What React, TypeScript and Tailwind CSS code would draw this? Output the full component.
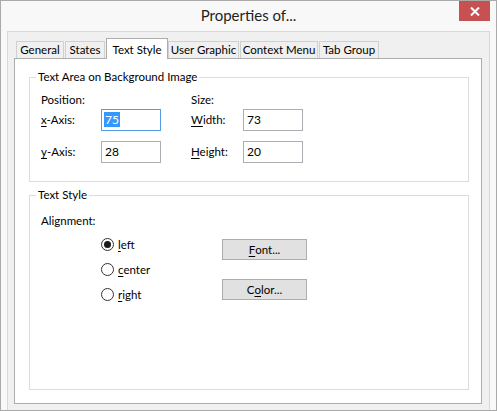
import React from "react";

const font = { fontFamily: 'Lato, "Segoe UI", Arial, sans-serif' };

function U({ children }: { children: React.ReactNode }) {
  return <span className="underline underline-offset-[2px] decoration-[1px]">{children}</span>;
}

function Tab({ label, w, active }: { label: string; w: number; active?: boolean }) {
  if (active) {
    return (
      <div
        className="relative z-10 -mb-px h-[21px] bg-white border border-b-0 border-[#adadad] flex items-start justify-center pt-[2px] text-[11.5px] text-black whitespace-nowrap"
        style={{ width: w }}
      >
        {label}
      </div>
    );
  }
  return (
    <div
      className="h-[17px] bg-[#f0f0f0] border border-b-0 border-[#d0d0d0] flex items-center justify-center text-[11.5px] text-black mr-px whitespace-nowrap"
      style={{ width: w }}
    >
      {label}
    </div>
  );
}

function Input({ value, focused }: { value: string; focused?: boolean }) {
  return (
    <div
      className={
        "w-[60px] h-[22px] bg-white border flex items-start pl-[2px] pt-[2px] text-[12px] leading-[15px] " +
        (focused ? "border-[#569de5]" : "border-[#abadb3]")
      }
    >
      {focused ? (
        <span className="bg-[#3399ff] text-white px-[1px]">{value}</span>
      ) : (
        <span className="px-[1px] text-black">{value}</span>
      )}
    </div>
  );
}

function Radio({ checked, children }: { checked?: boolean; children: React.ReactNode }) {
  return (
    <div className="h-[25px] flex items-center">
      <div className="w-[13px] h-[13px] rounded-full border border-[#333333] bg-white flex items-center justify-center">
        {checked && <div className="w-[7px] h-[7px] rounded-full bg-[#1a1a1a]" />}
      </div>
      <span className="ml-[4px] text-[11.5px] text-black">{children}</span>
    </div>
  );
}

function Button({ children }: { children: React.ReactNode }) {
  return (
    <div className="w-[85px] h-[21px] bg-[#e1e1e1] border border-[#adadad] flex items-center justify-center text-[11.5px] text-black">
      {children}
    </div>
  );
}

function Group({ title, children, className }: { title: string; children: React.ReactNode; className?: string }) {
  return (
    <div className={"relative border border-[#dcdcdc] " + (className || "")}>
      <span className="absolute -top-[9px] left-[6px] bg-white px-[2px] text-[11.5px] leading-[16px] text-black whitespace-nowrap">
        {title}
      </span>
      {children}
    </div>
  );
}

export default function App() {
  return (
    <div
      className="w-[497px] h-[411px] bg-[#f8f8f8] border border-[#aaaaaa] flex flex-col"
      style={font}
    >
      {/* title bar */}
      <div className="relative h-[30px] flex items-center justify-center shrink-0">
        <span className="text-[15px] text-[#1e1e1e] -mt-[1px]">Properties of...</span>
        <div className="absolute top-0 right-[6px] w-[31px] h-[20px] bg-[#c75050] flex items-center justify-center">
          <svg width="10" height="9" viewBox="0 0 10 9">
            <path d="M1 0.5 L9 8.5 M9 0.5 L1 8.5" stroke="#ffffff" strokeWidth="2" fill="none" />
          </svg>
        </div>
      </div>

      {/* client area */}
      <div className="ml-[6px] w-[483px] flex-1 bg-[#f0f0f0] border border-b-0 border-[#d9d9d9] flex flex-col pl-[6px] pr-[7px]">
        {/* tabs */}
        <div className="mt-[6px] h-[20px] flex items-end pl-[2px]">
          <Tab label="General" w={48} />
          <Tab label="States" w={40} />
          <Tab label="Text Style" w={62} active />
          <Tab label="User Graphic" w={71} />
          <Tab label="Context Menu" w={78} />
          <Tab label="Tab Group" w={60} />
        </div>

        {/* panel */}
        <div className="w-[468px] h-[346px] bg-white border border-[#adadad] flex flex-col pl-[14px]">
          <Group title="Text Area on Background Image" className="mt-[18px] w-[440px] h-[105px]">
            <div className="pt-[13px] pl-[11px]">
              <div className="h-[18px] flex items-center text-[11.5px] text-black">
                <span className="w-[150px]">Position:</span>
                <span>Size:</span>
              </div>
              <div className="h-[22px] flex items-center text-[11.5px] text-black">
                <span className="w-[60px]"><U>x</U>-Axis:</span>
                <Input value="75" focused />
                <span className="ml-[30px] w-[52px]"><U>W</U>idth:</span>
                <Input value="73" />
              </div>
              <div className="mt-[10px] h-[22px] flex items-center text-[11.5px] text-black">
                <span className="w-[60px]"><U>y</U>-Axis:</span>
                <Input value="28" />
                <span className="ml-[30px] w-[52px]"><U>H</U>eight:</span>
                <Input value="20" />
              </div>
            </div>
          </Group>

          <Group title="Text Style" className="mt-[13px] w-[440px] h-[195px]">
            <div className="pt-[17px] pl-[11px]">
              <div className="h-[16px] flex items-center text-[11.5px] text-black">Alignment:</div>
              <div className="mt-[3px] flex">
                <div className="ml-[60px] w-[121px] flex flex-col">
                  <Radio checked><U>l</U>eft</Radio>
                  <Radio><U>c</U>enter</Radio>
                  <Radio><U>r</U>ight</Radio>
                </div>
                <div className="pt-[7px] flex flex-col gap-[19px]">
                  <Button><U>F</U>ont...</Button>
                  <Button>C<U>o</U>lor...</Button>
                </div>
              </div>
            </div>
          </Group>
        </div>
      </div>
    </div>
  );
}
